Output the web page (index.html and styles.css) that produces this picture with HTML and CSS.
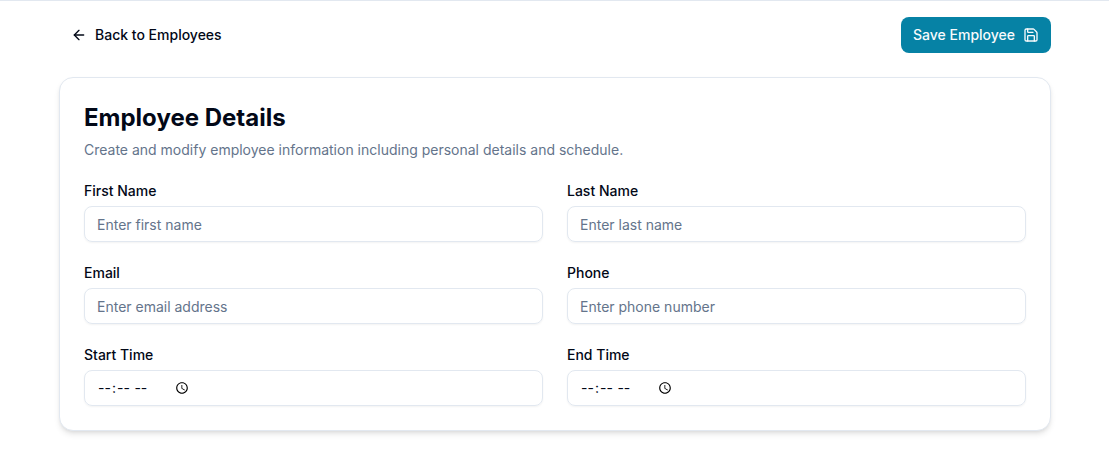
FILE: index.html
```html
<!DOCTYPE html>
<html lang="en">
<head>
<meta charset="utf-8">
<meta name="viewport" content="width=device-width, initial-scale=1">
<title>Employee Details</title>
<link rel="stylesheet" href="styles.css">
</head>
<body>
<main class="page">
  <form class="employee-form">
    <div class="toolbar">
      <a class="button button-ghost" href="#employees">
        <svg class="icon" viewBox="0 0 24 24" aria-hidden="true"><path d="m12 19-7-7 7-7"/><path d="M19 12H5"/></svg>
        Back to Employees
      </a>
      <button class="button button-primary" type="submit">
        Save Employee
        <svg class="icon" viewBox="0 0 24 24" aria-hidden="true"><path d="M15.2 3a2 2 0 0 1 1.4.6l3.8 3.8a2 2 0 0 1 .6 1.4V19a2 2 0 0 1-2 2H5a2 2 0 0 1-2-2V5a2 2 0 0 1 2-2z"/><path d="M17 21v-7a1 1 0 0 0-1-1H8a1 1 0 0 0-1 1v7"/><path d="M7 3v4a1 1 0 0 0 1 1h7"/></svg>
      </button>
    </div>
    <section class="card">
      <header class="card-header">
        <h1 class="card-title">Employee Details</h1>
        <p class="card-description">Create and modify employee information including personal details and schedule.</p>
      </header>
      <div class="fields">
        <div class="field">
          <label class="label" for="first-name">First Name</label>
          <input class="input" id="first-name" type="text" placeholder="Enter first name">
        </div>
        <div class="field">
          <label class="label" for="last-name">Last Name</label>
          <input class="input" id="last-name" type="text" placeholder="Enter last name">
        </div>
        <div class="field">
          <label class="label" for="email">Email</label>
          <input class="input" id="email" type="email" placeholder="Enter email address">
        </div>
        <div class="field">
          <label class="label" for="phone">Phone</label>
          <input class="input" id="phone" type="tel" placeholder="Enter phone number">
        </div>
        <div class="field">
          <label class="label" for="start-time">Start Time</label>
          <input class="input" id="start-time" type="time">
        </div>
        <div class="field">
          <label class="label" for="end-time">End Time</label>
          <input class="input" id="end-time" type="time">
        </div>
      </div>
    </section>
  </form>
</main>
</body>
</html>
```

FILE: styles.css
```css
*, *::before, *::after {
  box-sizing: border-box;
}

body {
  margin: 0;
  background: #fff;
  color: #020817;
  font-family: Inter, "Liberation Sans", sans-serif;
  font-size: 14px;
  line-height: 20px;
}

.page {
  border-top: 1px solid #e2e8f0;
  padding: 16px 58px 44px 59px;
}

.employee-form {
  display: flex;
  flex-direction: column;
  gap: 24px;
}

.toolbar {
  display: flex;
  align-items: center;
  justify-content: space-between;
}

.button {
  display: inline-flex;
  align-items: center;
  gap: 8px;
  height: 36px;
  padding: 0 12px;
  border: 0;
  border-radius: 8px;
  font: inherit;
  font-weight: 500;
  text-decoration: none;
  white-space: nowrap;
  cursor: pointer;
}

.button-ghost {
  color: #020817;
}

.button-primary {
  background: #0682a5;
  color: #f8fafc;
}

.icon {
  width: 16px;
  height: 16px;
  fill: none;
  stroke: currentColor;
  stroke-width: 2;
  stroke-linecap: round;
  stroke-linejoin: round;
}

.card {
  padding: 24px;
  border: 1px solid #e2e8f0;
  border-radius: 14px;
  background: #fff;
  box-shadow: 0 4px 6px -1px rgb(0 0 0 / 10%), 0 2px 4px -2px rgb(0 0 0 / 10%);
}

.card-header {
  display: flex;
  flex-direction: column;
  gap: 6px;
  margin-bottom: 24px;
}

.card-title {
  margin: 0;
  font-size: 24px;
  line-height: 32px;
  font-weight: 700;
}

.card-description {
  margin: 0;
  color: #64748b;
}

.fields {
  display: grid;
  grid-template-columns: 1fr 1fr;
  gap: 24px;
}

.field {
  display: flex;
  flex-direction: column;
  gap: 8px;
}

.label {
  line-height: 14px;
  font-weight: 500;
}

.input {
  display: flex;
  width: 100%;
  height: 36px;
  padding: 4px 12px;
  border: 1px solid #e2e8f0;
  border-radius: 8px;
  background: transparent;
  color: inherit;
  font: inherit;
  box-shadow: 0 1px 2px rgb(0 0 0 / 5%);
}

.input::placeholder {
  color: #64748b;
}

.input::-webkit-datetime-edit {
  flex: none;
}
```
